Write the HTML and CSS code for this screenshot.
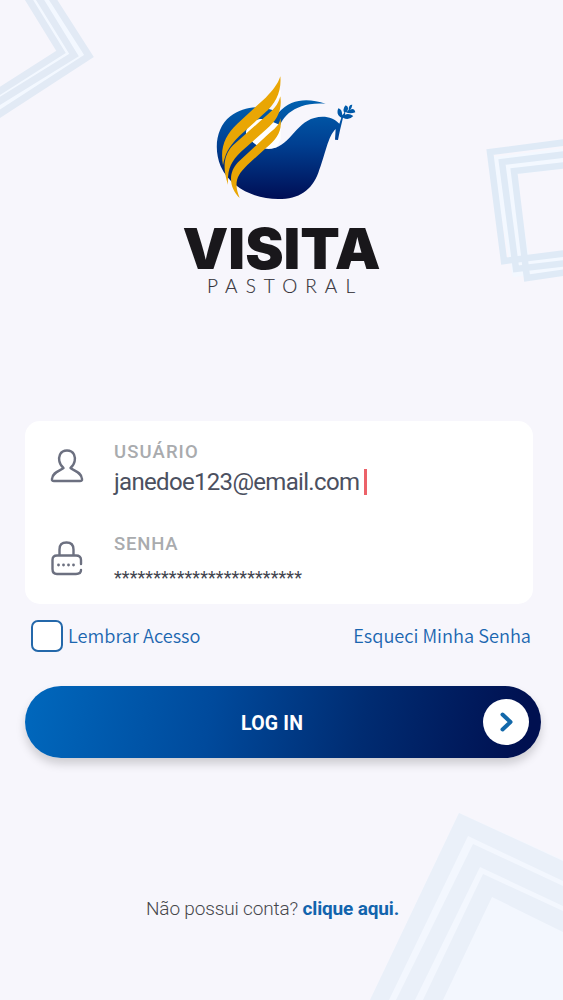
FILE: index.html
```html
<!DOCTYPE html>
<html lang="pt-BR">
<head>
<meta charset="utf-8">
<title>Visita Pastoral</title>
<link rel="stylesheet" href="styles.css">
</head>
<body>
<main class="screen">
  <svg class="backdrop" viewBox="0 0 563 1000" aria-hidden="true">
    <g fill="none" stroke="#f3f8ff" stroke-width="20">
      <path d="M40-5 75 54-5 106"/>
      <path d="M568 158 502 166 521 266 568 261"/>
    </g>
    <g fill="none" stroke="#e2eaf5" stroke-width="7">
      <path d="M26-5 61 52-5 94"/>
      <path d="M37-5 74 55-5 104"/>
      <path d="M50-5 89 56-5 117"/>
    </g>
    <g fill="none" stroke="#dfeaf6" stroke-width="6.500">
      <path d="M568 142 490 152 504 261 568 253"/>
      <path d="M568 154 502 162 516 269 568 263"/>
      <path d="M568 165 514 171 527 278 568 272"/>
    </g>
    <path fill="#f3f7fe" d="M370 1000 459 813 563 860V1000Z"/>
    <g fill="#eaf0f9">
      <path d="M370 1000 459 813 563 861V881L468 836 389 1000Z"/>
      <path d="M396 1000 473 844 563 886V906L480 867 415 1000Z"/>
      <path d="M423 1000 483 874 563 911V932L492 897 443 1000Z"/>
    </g>
  </svg>

  <header class="brand">
    <svg class="emblem" viewBox="0 0 510 435" role="img" aria-label="Visita Pastoral">
      <defs>
        <linearGradient id="dove" x1="0" y1="0" x2="0" y2="1">
          <stop offset="0" stop-color="#0061b0"/>
          <stop offset=".45" stop-color="#003f91"/>
          <stop offset="1" stop-color="#000e55"/>
        </linearGradient>
      </defs>
      <path fill="url(#dove)" d="M377 116C325 99 275 99 235 143 190 118 133 121 91 154 49 187 40 250 62 304 93 371 166 402 235 402 298 402 335 376 355 323 376 269 384 213 407 192L405 224 414 225C418 203 423 183 429 158Q446 168 460 153 447 144 435 149L436 141Q450 148 466 142 462 127 450 135 456 128 457 119 446 118 446 134L440 141Q450 126 437 121 426 131 433 143L427 151Q426 132 415 130 407 148 424 158L418 176C401 157 371 150 343 159 286 173 266 252 205 252 177 251 151 229 138 208 138 174 173 156 205 168 221 173 230 187 237 196 238 163 281 108 377 116Z"/>
      <path fill="#fff" d="M138 208C138 172 174 154 206 166L242 181 242 221 230 247C188 258 160 238 138 208Z"/>
      <path fill="#fff" d="M190 132 242 73 242 94 206 132Z"/>
      <g fill="#e9a604">
        <path d="M241 34C245 78 228 116 193 145L118 213C82 250 76 267 69 301 59 246 76 210 112 176L197 98C217 78 234 57 241 34Z"/>
        <path d="M241 94C247 137 231 166 199 193L123 260C91 291 82 315 84 359 68 312 69 272 99 241L190 160C220 135 234 121 241 94Z"/>
        <path d="M241 160C248 199 229 224 198 249L142 300C107 334 102 356 119 399 89 370 82 326 114 292L202 210C223 191 238 183 241 160Z"/>
      </g>
    </svg>
    <svg class="wordmark" viewBox="0 -14 200 88" aria-hidden="true">
      <text class="word-main" x="0.500" y="45" textLength="198" lengthAdjust="spacingAndGlyphs">VISITA</text>
      <text class="word-sub" x="25" y="69" textLength="148">PASTORAL</text>
    </svg>
  </header>

  <form class="login">
    <section class="card">
      <div class="field">
        <svg class="field-icon" viewBox="0 0 34 36"><path d="M13.500 20C8.500 16 8.500 10 10 6.500Q12 2.500 17 2.500T24 6.500C25.500 10 25.500 16 20.500 20 24 23 31.500 24 32 31Q32.500 33 30 33H4Q1.500 33 2 31C2.500 24 10 23 13.500 20Z"/></svg>
        <div>
          <div class="label label-user">USUÁRIO</div>
          <div class="value"><span class="email">janedoe123@email.com</span><i class="caret"></i></div>
        </div>
      </div>
      <div class="field">
        <svg class="field-icon" viewBox="0 0 34 36"><path d="M9.500 15V9.500Q9.500 2.500 16.500 2.500T23.500 9.500V15M31 24V20Q31 15.500 26 15.500H7Q2.500 15.500 2.500 20V29Q2.500 34 7 34H26Q31 34 31 30"/><path class="dots" d="M8.500 25h.01M13.500 25h.01M18.500 25h.01M23.500 25h.01"/></svg>
        <div>
          <div class="label label-pass">SENHA</div>
          <div class="secret">************************</div>
        </div>
      </div>
    </section>
    <div class="options">
      <label class="remember"><span class="box"></span><span class="option-text">Lembrar Acesso</span></label>
      <a class="forgot option-text">Esqueci Minha Senha</a>
    </div>
    <div class="submit">
      <span class="submit-text">LOG IN</span>
      <span class="submit-arrow"><svg viewBox="0 0 46 46"><path d="M19.500 15.500 27.500 23 19.500 30.500"/></svg></span>
    </div>
  </form>
  <p class="signup"><span>Não possui conta?</span> <b>clique aqui.</b></p>
</main>
</body>
</html>
```

FILE: styles.css
```css
* { box-sizing: border-box; }
body { margin: 0; background: #f7f6fc; font-family: Roboto, sans-serif; }
.screen { position: relative; height: 1000px; overflow: hidden; display: flex; flex-direction: column; }
.screen > * { position: relative; }
.screen > .backdrop { position: absolute; inset: 0; width: 563px; height: 1000px; }
.brand { display: flex; flex-direction: column; align-items: center; padding-top: 65px; height: 421px; }
.emblem { width: 170px; height: 145px; margin-left: 7px; }
.wordmark { width: 200px; height: 88px; overflow: visible; }
.word-main { font: 900 56px "Inter", sans-serif; fill: #19171b; }
.word-sub { font: 300 19px Lato, sans-serif; fill: #333137; stroke: #333137; stroke-width: .15; }
.login { padding: 0 22px 0 25px; }
.card { width: 508px; height: 183px; border-radius: 15px; background: #fff; padding-top: 20px; }
.field { display: grid; grid-template-columns: 34px 1fr; column-gap: 30px; padding-left: 25px; height: 92px; }
.field-icon { width: 34px; height: 36px; margin-top: 7px; fill: none; stroke: #6c7080; stroke-width: 2.400; stroke-linecap: round; stroke-linejoin: round; }
.dots { stroke-width: 2.800; }
.label { font-size: 18.500px; font-weight: 500; line-height: 22px; color: #a9abae; }
.label-user { letter-spacing: 1.1px; }
.label-pass { letter-spacing: .8px; }
.value { display: flex; align-items: center; height: 37px; color: #4b5060; font-size: 24px; letter-spacing: -.68px; white-space: nowrap; }
.caret { width: 3px; height: 26px; margin-left: 5px; background: #ec6269; }
.secret { font-size: 18px; line-height: 24px; padding-top: 11px; letter-spacing: .08px; color: #43454f; }
.options { display: flex; justify-content: space-between; align-items: center; width: 506px; height: 64px; padding-left: 6px; color: #1b66b0; font: 350 18.200px "Noto Sans CJK JP", sans-serif; }
.option-text { padding-bottom: 3px; }
.remember { display: flex; align-items: center; gap: 5px; }
.box { width: 32px; height: 32px; border: 2px solid #2468aa; border-radius: 7px; background: #fff; }
.submit { display: flex; align-items: center; justify-content: space-between; width: 516px; height: 72px; margin-top: 18px; padding: 0 12px 0 216px; border-radius: 36px; color: #fff; background: linear-gradient(100deg, #0068bd, #004a9c 36%, #002c72 65%, #001050 96%); box-shadow: 0 6px 10px #0000002b; }
.submit-text { font-size: 19.500px; font-weight: 700; letter-spacing: .2px; padding-top: 2px; }
.submit-arrow { width: 46px; height: 46px; border-radius: 50%; background: #fff; }
.submit-arrow svg { display: block; fill: none; stroke: #1268aa; stroke-width: 4; stroke-linecap: round; stroke-linejoin: round; }
.signup { margin: 138px 0 0 146px; font-size: 19px; letter-spacing: -.15px; line-height: 26px; font-weight: 300; color: #46464b; white-space: nowrap; }
.signup b { color: #1264ad; font-weight: 700; }
```
